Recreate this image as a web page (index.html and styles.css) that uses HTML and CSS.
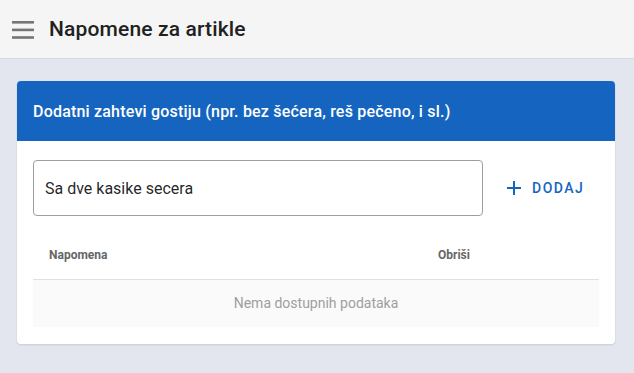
FILE: index.html
```html
<!DOCTYPE html>
<html>
<head>
<meta charset="utf-8">
<link rel="stylesheet" href="styles.css">
</head>
<body>
<header class="topbar">
  <span class="menu-btn">
    <svg width="22" height="18" viewBox="0 0 22 18"><rect x="0" y="0" width="22" height="2.6" fill="#757575"/><rect x="0" y="7.6" width="22" height="2.6" fill="#757575"/><rect x="0" y="15.2" width="22" height="2.6" fill="#757575"/></svg>
  </span>
  <h1 class="title">Napomene za artikle</h1>
</header>
<main class="content">
  <section class="card">
    <div class="card-title">Dodatni zahtevi gostiju (npr. bez šećera, reš pečeno, i sl.)</div>
    <div class="card-body">
      <div class="input-row">
        <div class="field">Sa dve kasike secera</div>
        <button class="add-btn">
          <svg class="plus" width="24" height="24" viewBox="0 0 24 24"><path d="M19 13h-6v6h-2v-6H5v-2h6V5h2v6h6v2z" fill="#1565c0"/></svg>
          <span>DODAJ</span>
        </button>
      </div>
      <table class="table">
        <thead>
          <tr><th class="col-note">Napomena</th><th>Obriši</th></tr>
        </thead>
        <tbody>
          <tr class="empty"><td colspan="2">Nema dostupnih podataka</td></tr>
        </tbody>
      </table>
    </div>
  </section>
</main>
</body>
</html>
```

FILE: styles.css
```css
* { box-sizing: border-box; }
html, body { margin: 0; padding: 0; }
body {
  font-family: Roboto, "Noto Sans", sans-serif;
  background: #e3e6ee;
  width: 634px;
  height: 373px;
  overflow: hidden;
}
.topbar {
  height: 59px;
  background: #f5f5f5;
  border-bottom: 1px solid #d6d8de;
  display: flex;
  align-items: center;
  padding-left: 12px;
}
.menu-btn { display: flex; width: 22px; height: 18px; margin-top: 1px; }
.title {
  margin: 0 0 0 15px;
  font-size: 21px;
  font-weight: 500;
  color: #212121;
  letter-spacing: 0.15px;
}
.content { padding: 22px 19px 0 17px; }
.card {
  background: #fff;
  border-radius: 4px;
  box-shadow: 0 1px 2px rgba(0,0,0,0.12);
  overflow: hidden;
}
.card-title {
  height: 60px;
  background: #1565c0;
  color: #fff;
  font-size: 16px;
  font-weight: 500;
  letter-spacing: 0.2px;
  display: flex;
  align-items: center;
  padding-left: 16px;
  padding-top: 1px;
}
.card-body { padding: 19px 16px 17px 16px; }
.input-row { display: flex; align-items: center; }
.field {
  width: 450px;
  height: 56px;
  border: 1px solid #9e9e9e;
  border-radius: 4px;
  display: flex;
  align-items: center;
  padding-left: 11px;
  font-size: 16px;
  color: rgba(0,0,0,0.87);
}
.add-btn {
  flex: 1;
  height: 36px;
  border: none;
  background: transparent;
  display: flex;
  align-items: center;
  padding: 0 0 0 19px;
  font-family: Roboto, sans-serif;
  font-size: 14px;
  font-weight: 500;
  letter-spacing: 1.5px;
  color: #1565c0;
}
.plus { margin-right: 6px; }
.table {
  width: 100%;
  border-collapse: collapse;
  margin-top: 15px;
}
.table th {
  height: 48px;
  text-align: left;
  padding: 0 16px;
  font-size: 12px;
  font-weight: 700;
  color: #666;
  border-bottom: 1px solid #e0e0e0;
}
.table th.col-note { width: 389px; }
.empty td {
  height: 48px;
  background: #fafafa;
  text-align: center;
  font-size: 14px;
  color: #9e9e9e;
}
```
